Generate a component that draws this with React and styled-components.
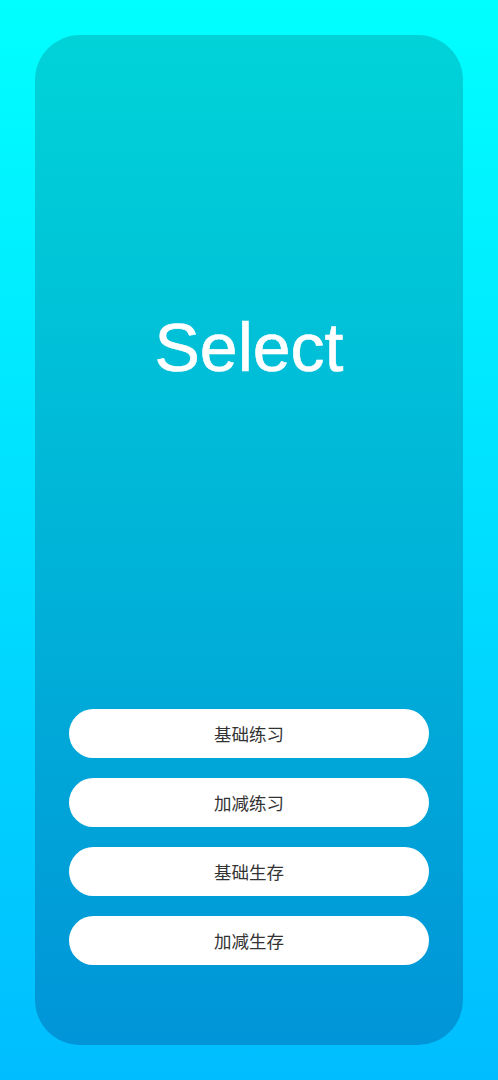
import React from "react";
import styled, { createGlobalStyle } from "styled-components";

const GlobalStyle = createGlobalStyle`
  html, body {
    margin: 0;
    padding: 0;
  }
  body {
    font-family: "Liberation Sans", Arial, sans-serif;
  }
`;

const Page = styled.main`
  min-height: 100vh;
  box-sizing: border-box;
  padding: 35px;
  background: linear-gradient(180deg, #00ffff 0%, #00bdff 100%);
`;

const Card = styled.section`
  height: 1010px;
  box-sizing: border-box;
  display: flex;
  flex-direction: column;
  align-items: center;
  padding: 278px 34px 80px;
  border-radius: 45px;
  background: linear-gradient(180deg, #00d3d8 0%, #0095d8 100%);
`;

const Title = styled.h1`
  margin: 0;
  font-family: "Liberation Sans", Arial, sans-serif;
  font-weight: 400;
  font-size: 68px;
  line-height: 1;
  color: #ffffff;
  -webkit-text-stroke: 0.6px #ffffff;
`;

const Menu = styled.nav`
  margin-top: auto;
  width: 100%;
  display: flex;
  flex-direction: column;
  gap: 20px;
`;

const MenuButton = styled.button`
  height: 49px;
  width: 100%;
  border: none;
  border-radius: 25px;
  background: #ffffff;
  color: #333333;
  font-family: "Noto Sans CJK SC", "Noto Sans", sans-serif;
  font-size: 17.5px;
  cursor: pointer;
`;

const modes = ["基础练习", "加减练习", "基础生存", "加减生存"];

export default function App() {
  return (
    <>
      <GlobalStyle />
      <Page>
        <Card>
          <Title>Select</Title>
          <Menu>
            {modes.map((mode) => (
              <MenuButton key={mode}>{mode}</MenuButton>
            ))}
          </Menu>
        </Card>
      </Page>
    </>
  );
}
